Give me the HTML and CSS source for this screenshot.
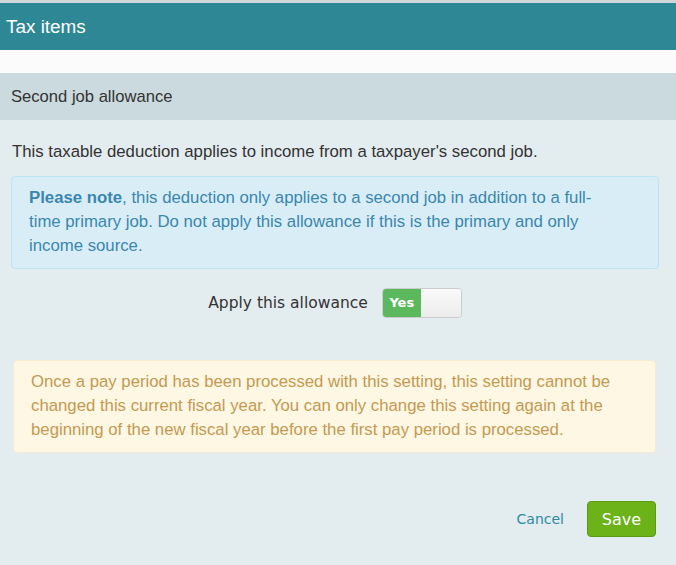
FILE: index.html
```html
<!DOCTYPE html>
<html>
<head>
<meta charset="utf-8">
<link rel="stylesheet" href="styles.css">
</head>
<body>
<div class="panel">
  <div class="title-bar">Tax items</div>
  <div class="spacer"></div>
  <div class="section-head">Second job allowance</div>
  <div class="section-body">
    <p class="intro">This taxable deduction applies to income from a taxpayer's second job.</p>
    <div class="alert info"><strong>Please note</strong>, this deduction only applies to a second job in addition to a full-time primary job. Do not apply this allowance if this is the primary and only income source.</div>
    <div class="toggle-row">
      <span class="toggle-label">Apply this allowance</span>
      <span class="switch"><span class="switch-on">Yes</span><span class="switch-knob"></span></span>
    </div>
    <div class="alert warning">Once a pay period has been processed with this setting, this setting cannot be changed this current fiscal year. You can only change this setting again at the beginning of the new fiscal year before the first pay period is processed.</div>
    <div class="actions">
      <a class="cancel">Cancel</a>
      <button class="save">Save</button>
    </div>
  </div>
</div>
</body>
</html>
```
FILE: styles.css
```css
html, body {
  margin: 0;
  padding: 0;
  background: #e3ecef;
  font-family: "Liberation Sans", Arial, sans-serif;
}
.panel {
  border-top: 3px solid #d3d6d8;
  min-height: 562px;
  background: #e3ecef;
}
.title-bar {
  background: #2e8795;
  color: #fff;
  font-size: 18.9px;
  height: 47px;
  line-height: 47px;
  padding-left: 6px;
}
.spacer {
  height: 23px;
  background: #fbfbfb;
}
.section-head {
  background: #cbdade;
  color: #333;
  font-size: 16.6px;
  height: 47px;
  line-height: 47px;
  padding-left: 11px;
}
.section-body {
  padding: 0 17px 0 11px;
}
.intro {
  margin: 0;
  padding: 22px 0 0 1px;
  font-size: 16.75px;
  line-height: 20px;
  color: #333;
}
.alert {
  border-radius: 4px;
  font-size: 16.75px;
  line-height: 24px;
}
.info {
  margin-top: 14px;
  background: #d9edf7;
  border: 1px solid #bde6f2;
  color: #3a87ad;
  padding: 9px 50px 10px 17px;
}
.info strong { font-weight: bold; }
.toggle-row {
  display: flex;
  align-items: center;
  justify-content: center;
  gap: 14px;
  margin-top: 19px;
  height: 30px;
}
.toggle-label {
  font-family: "DejaVu Sans", Verdana, sans-serif;
  font-size: 15.5px;
  color: #333;
}
.switch {
  display: flex;
  width: 78px;
  height: 28px;
  border: 1px solid #ccc;
  border-radius: 4px;
  overflow: hidden;
  background: #f5f5f5;
}
.switch-on {
  width: 38px;
  background: #5cb85c;
  color: #fff;
  font-family: "DejaVu Sans", Verdana, sans-serif;
  font-weight: bold;
  font-size: 13px;
  line-height: 28px;
  text-align: center;
}
.switch-knob {
  flex: 1;
  background: linear-gradient(#fafafa, #ececec);
}
.warning {
  margin: 42px 3px 0 2px;
  background: #fdf7e3;
  border: 1px solid #f8ecd0;
  color: #c49a52;
  padding: 9px 30px 10px 17px;
}
.actions {
  display: flex;
  justify-content: flex-end;
  align-items: center;
  gap: 23px;
  margin-top: 48px;
  padding-right: 3px;
}
.cancel {
  font-family: "DejaVu Sans", Verdana, sans-serif;
  font-size: 14px;
  color: #2f8aa6;
}
.save {
  width: 69px;
  height: 36px;
  background: #6cb31a;
  border: 1px solid #5b9b14;
  border-radius: 4px;
  color: #fff;
  font-family: "DejaVu Sans", Verdana, sans-serif;
  font-size: 16px;
}
```
